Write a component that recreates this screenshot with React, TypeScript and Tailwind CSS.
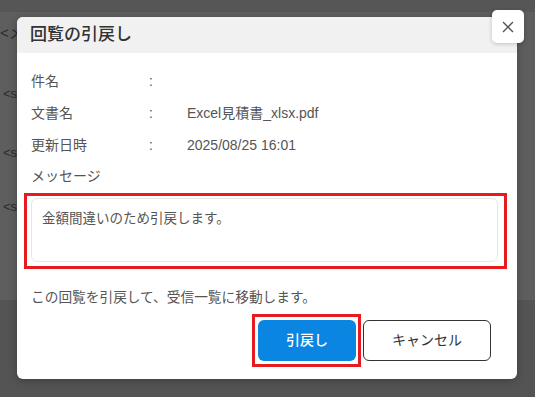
import React from "react";

const font = { fontFamily: '"Liberation Sans", "Noto Sans CJK JP", sans-serif' };

function Row({ label, value }: { label: string; value?: string }) {
  return (
    <div className="flex h-8 items-center text-[14px] text-[#555]">
      <div className="w-[118px]">{label}</div>
      <div className="w-[38px]">:</div>
      <div>{value}</div>
    </div>
  );
}

export default function App() {
  return (
    <div className="relative h-[397px] w-[535px] overflow-hidden bg-[#545454]" style={font}>
      {/* background page (dimmed) */}
      <div className="flex flex-col">
        <div className="h-3 bg-[#565656]" />
        <div className="flex h-[288px] flex-col bg-[#5e5e5e] text-[#2b2b2b]">
          <div className="mt-[12px] h-[18px] text-[15px] leading-[18px]">&lt;メ</div>
          <div className="ml-[3px] mt-[43px] text-[13px] leading-[18px]">&lt;s</div>
          <div className="ml-[3px] mt-[41px] text-[13px] leading-[18px]">&lt;s</div>
          <div className="ml-[3px] mt-[36px] text-[13px] leading-[18px]">&lt;s</div>
        </div>
      </div>

      {/* dialog */}
      <div className="absolute left-[17px] top-[17px] flex h-[362px] w-[500px] flex-col rounded-[6px] bg-white shadow-[0_2px_8px_rgba(0,0,0,0.25)]">
        <div className="flex h-9 items-center rounded-t-[6px] bg-[#f1f1f1] pl-[13px] text-[17px] font-medium text-[#333]">
          回覧の引戻し
        </div>
        <div className="flex flex-col px-[14px] pt-3">
          <Row label="件名" />
          <Row label="文書名" value="Excel見積書_xlsx.pdf" />
          <Row label="更新日時" value="2025/08/25 16:01" />
          <div className="flex h-[30px] items-center text-[14px] text-[#555]">メッセージ</div>
          <div className="ml-[-7px] mr-[-4px] mt-[2px] border-[3px] border-[#e51b1f] pb-[4px] pl-[4px] pr-[6px] pt-[2px]">
            <div className="h-[64px] rounded-[6px] border border-[#e6e6e6] px-[10px] pt-[10px] text-[13.5px] leading-5 text-[#555]">
              金額間違いのため引戻します。
            </div>
          </div>
          <div className="mt-[19px] h-5 text-[13.7px] leading-5 text-[#555]">
            この回覧を引戻して、受信一覧に移動します。
          </div>
        </div>
        <div className="mt-[6px] flex items-center justify-end gap-[2px] pr-[26px]">
          <div className="border-[3px] border-[#e51b1f] pb-[3px] pl-[3px] pr-[2px] pt-[3px]">
            <button className="flex h-[41px] w-[98px] items-center justify-center rounded-[6px] bg-[#0b85e2] text-[14px] font-medium text-white">
              引戻し
            </button>
          </div>
          <button className="flex h-[41px] w-[128px] items-center justify-center rounded-[6px] border border-[#333] bg-white text-[14px] text-[#333]">
            キャンセル
          </button>
        </div>
      </div>

      {/* close button */}
      <button className="absolute left-[492px] top-[10px] flex h-[33px] w-[32px] items-center justify-center rounded-[5px] bg-white shadow-[0_1px_4px_rgba(0,0,0,0.2)]">
        <svg width="12" height="12" viewBox="0 0 12 12" fill="none" stroke="#555" strokeWidth="1.4">
          <path d="M1 1L11 11M11 1L1 11" />
        </svg>
      </button>
    </div>
  );
}
